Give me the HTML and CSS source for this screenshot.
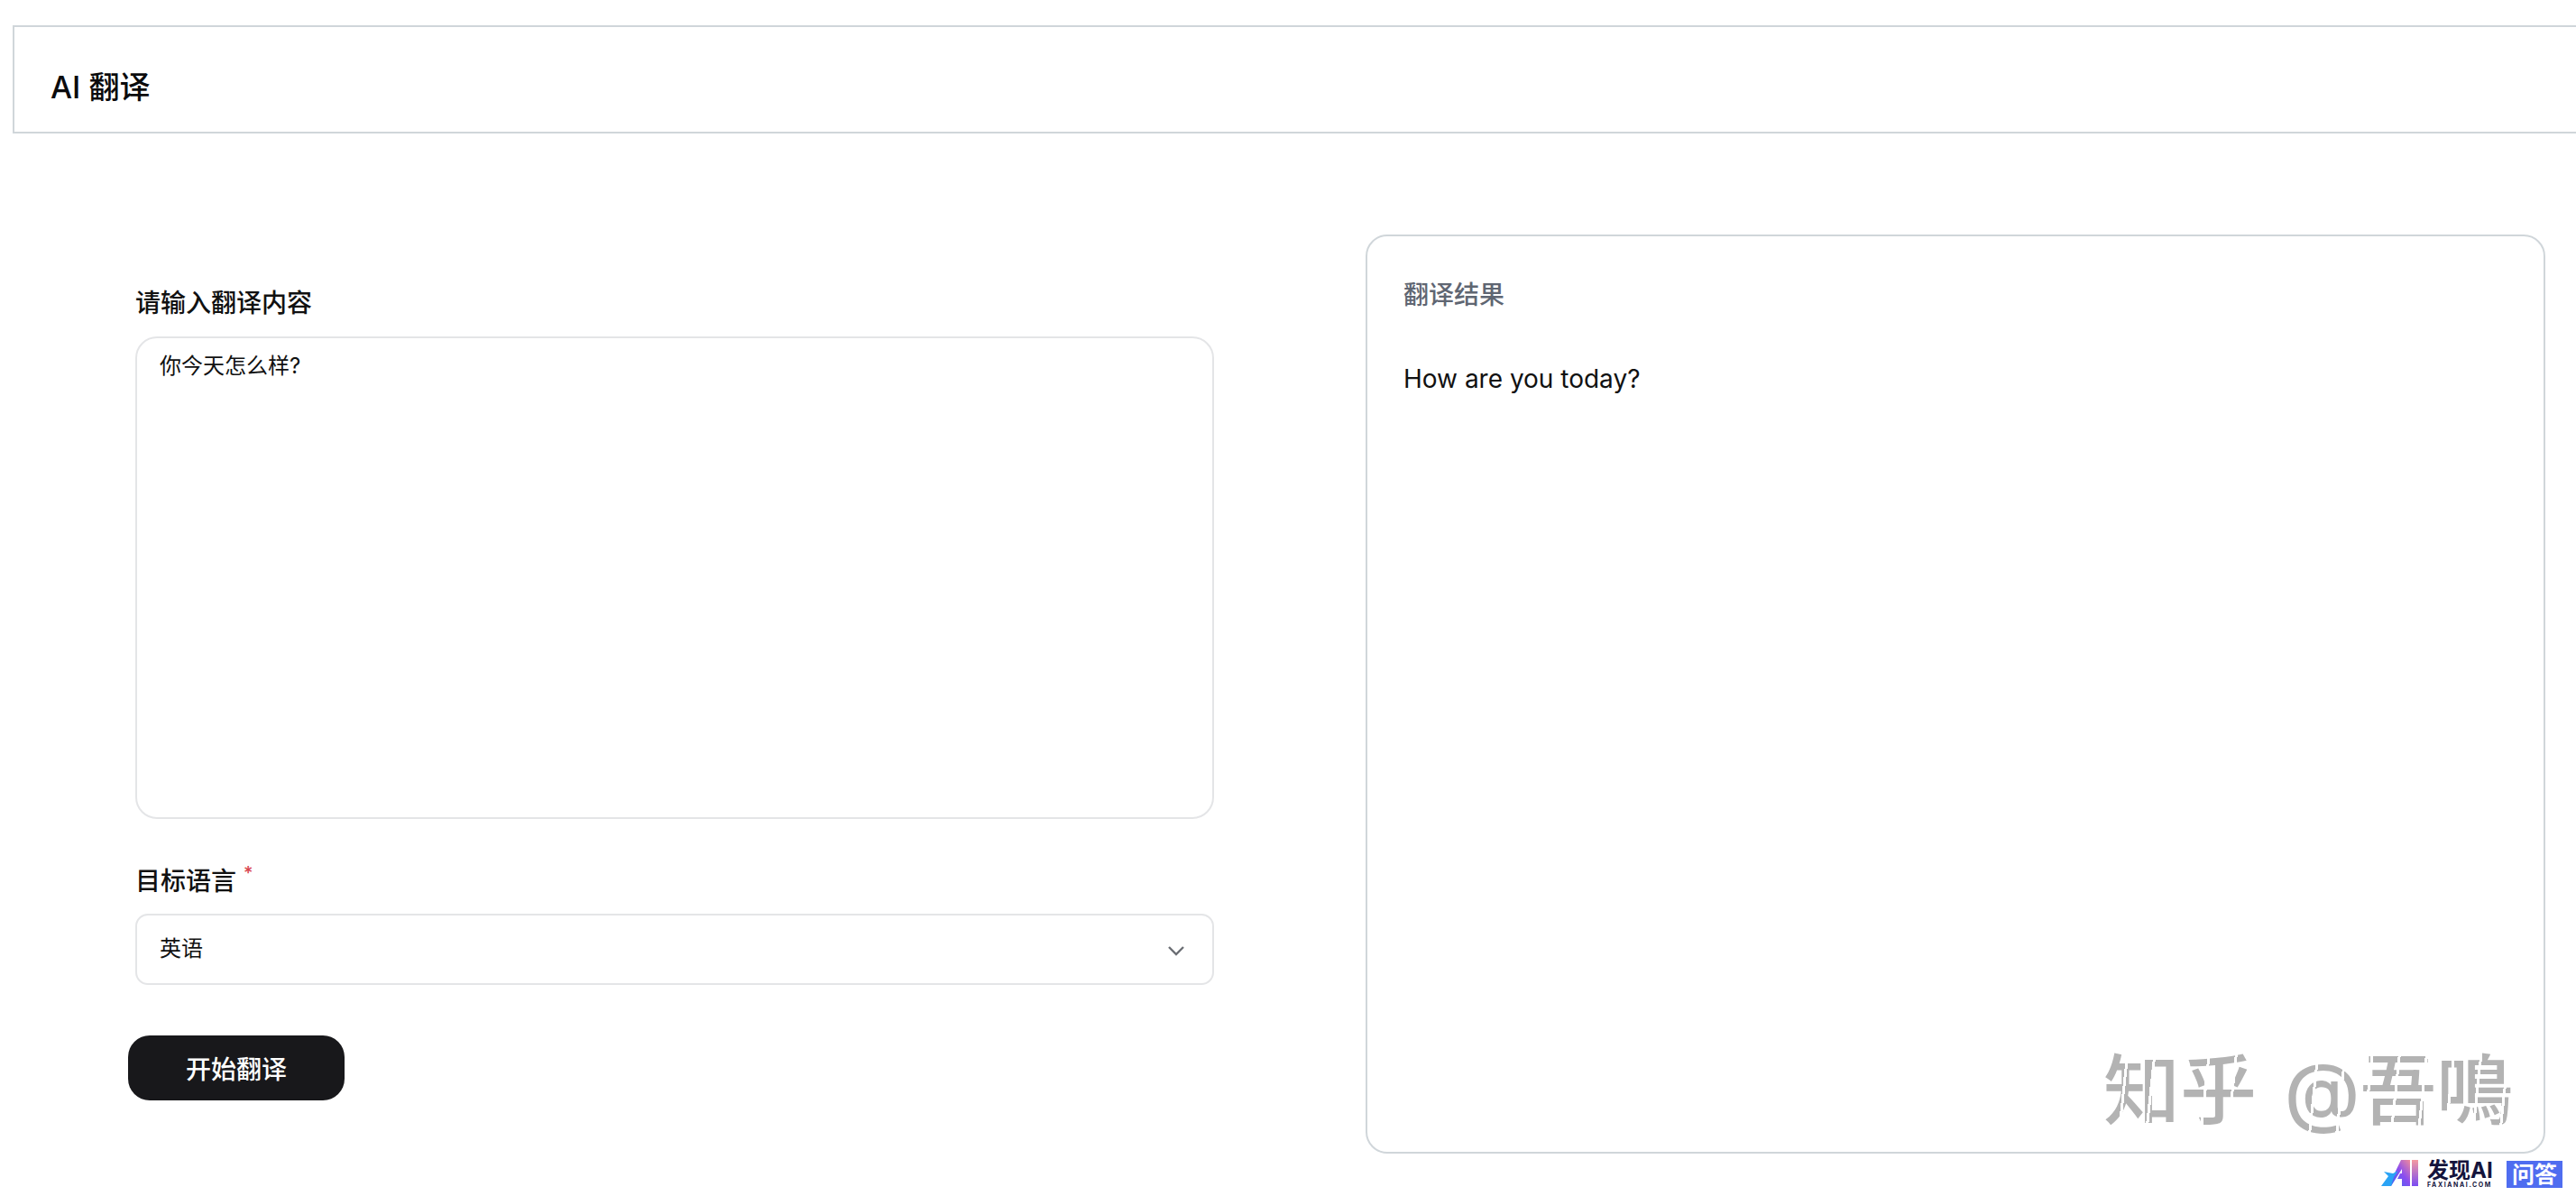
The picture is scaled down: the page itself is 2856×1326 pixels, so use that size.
FILE: index.html
```html
<!DOCTYPE html>
<html lang="zh-CN">
<head>
    <meta charset="UTF-8">
    <meta name="viewport" content="width=device-width, initial-scale=1.0">
    <title>AI 翻译</title>
    <link rel="stylesheet" href="styles.css">
</head>
<body>
    <header class="top-bar">
        <h1>AI 翻译</h1>
    </header>

    <main class="layout">
        <form class="form-panel">
            <label class="field-label" for="source-text">请输入翻译内容</label>
            <textarea class="source-input" id="source-text">你今天怎么样?</textarea>

            <div class="field-label field-label-second">目标语言<span class="required">*</span></div>
            <div class="select-box">
                <span>英语</span>
                <svg class="chevron" width="20" height="12" viewBox="0 0 20 12" fill="none">
                    <path d="M2 2l8 8 8-8" stroke="#6b6e74" stroke-width="2.4"/>
                </svg>
            </div>

            <button class="submit-btn" type="button">开始翻译</button>
        </form>

        <section class="result-card">
            <h2>翻译结果</h2>
            <p>How are you today?</p>
        </section>
    </main>

    <!-- 图片水印 -->
    <div class="watermark">知乎 @吾鳴</div>

    <div class="site-badge">
        <svg class="badge-logo" width="42" height="30" viewBox="0 0 42 30">
            <defs>
                <linearGradient id="logoGrad" x1="0" y1="1" x2="1" y2="0">
                    <stop offset="0" stop-color="#2f6df2"/>
                    <stop offset="0.55" stop-color="#8a4df0"/>
                    <stop offset="1" stop-color="#f08a9a"/>
                </linearGradient>
                <linearGradient id="barGrad" x1="0" y1="1" x2="0" y2="0">
                    <stop offset="0" stop-color="#7a4cf2"/>
                    <stop offset="1" stop-color="#f59aa0"/>
                </linearGradient>
            </defs>
            <path d="M22 0h10v29h-9v-8h-5l3-6h2V10L11 29H8z" fill="url(#logoGrad)"/>
            <rect x="34" y="0" width="7" height="29" fill="url(#barGrad)"/>
            <path d="M3 13l10 2 6-3-5 7-3 10H0l8-11z" fill="#2aa3f5"/>
        </svg>
        <div class="badge-name">
            <strong>发现AI</strong>
            <small>FAXIANAI.COM</small>
        </div>
        <span class="badge-tag">问答</span>
    </div>
</body>
</html>
```

FILE: styles.css
```css
* {
    margin: 0;
    padding: 0;
    box-sizing: border-box;
}

body {
    font-family: "Inter", "Noto Sans CJK SC", sans-serif;
    background: #fff;
    color: #111;
    width: 2856px;
    height: 1326px;
    overflow: hidden;
    position: relative;
}

.top-bar {
    width: 2900px;
    height: 120px;
    margin: 28px 0 0 14px;
    padding: 12px 0 0 40px;
    display: flex;
    align-items: center;
    border: 2px solid #d0d6da;
}

.top-bar h1 {
    font-size: 34px;
    font-weight: 500;
    color: #0b0b0d;
}

.layout {
    display: flex;
    gap: 168px;
    padding: 112px 0 0 142px;
}

.form-panel {
    width: 1204px;
    padding-top: 56px;
    display: flex;
    flex-direction: column;
    align-items: flex-start;
}

.field-label {
    margin-left: 8px;
    font-size: 28px;
    line-height: 40px;
    font-weight: 500;
    color: #111;
}

.field-label-second {
    margin-top: 49px;
}

.required {
    position: relative;
    top: -12px;
    margin-left: 8px;
    font-size: 20px;
    color: #d9434e;
}

.source-input {
    display: block;
    width: 1196px;
    height: 535px;
    margin: 17px 0 0 8px;
    padding: 15px 25px;
    border: 2px solid #e4e5e7;
    border-radius: 24px;
    outline: none;
    resize: none;
    font: inherit;
    font-size: 24px;
    line-height: 32px;
    color: #111;
}

.select-box {
    width: 1196px;
    height: 79px;
    margin: 13px 0 0 8px;
    padding: 0 30px 7px 25px;
    display: flex;
    align-items: center;
    justify-content: space-between;
    border: 2px solid #e4e5e7;
    border-radius: 14px;
    font-size: 24px;
    color: #111;
}

.chevron {
    margin-top: 9px;
}

.submit-btn {
    width: 240px;
    height: 72px;
    margin-top: 56px;
    border: none;
    border-radius: 24px;
    background: #18181b;
    color: #fff;
    font: inherit;
    font-size: 28px;
    font-weight: 500;
}

.result-card {
    width: 1308px;
    height: 1019px;
    padding: 45px 40px;
    border: 2px solid #d0d6da;
    border-radius: 24px;
}

.result-card h2 {
    font-size: 28px;
    line-height: 40px;
    font-weight: 500;
    color: #5f6672;
}

.result-card p {
    margin-top: 53px;
    font-size: 28px;
    line-height: 40px;
    font-weight: 400;
    color: #111;
}

/* 水印的笔画是断开的，用遮罩切几道缝 */
.watermark {
    position: absolute;
    left: 2332px;
    top: 1150px;
    font-size: 85px;
    line-height: 120px;
    font-weight: 500;
    white-space: nowrap;
    word-spacing: 8px;
    color: #b3b3b3;
    -webkit-mask-image: repeating-linear-gradient(96deg, #000 0 27px, transparent 27px 30px);
    mask-image: repeating-linear-gradient(96deg, #000 0 27px, transparent 27px 30px);
}

.site-badge {
    position: absolute;
    left: 2640px;
    top: 1286px;
    display: flex;
    align-items: flex-start;
}

.badge-logo {
    margin-right: 9px;
}

.badge-name {
    display: flex;
    flex-direction: column;
    width: 74px;
}

.badge-name strong {
    font-size: 24px;
    line-height: 24px;
    font-weight: 700;
    white-space: nowrap;
    color: #14143c;
}

.badge-name small {
    font-size: 7px;
    line-height: 8px;
    letter-spacing: 1.6px;
    white-space: nowrap;
    font-weight: 700;
    color: #14143c;
}

.badge-tag {
    width: 62px;
    height: 30px;
    margin: 1px 0 0 14px;
    background: #4f6df0;
    color: #fff;
    font-size: 25px;
    line-height: 30px;
    font-weight: 700;
    text-align: center;
}
```
